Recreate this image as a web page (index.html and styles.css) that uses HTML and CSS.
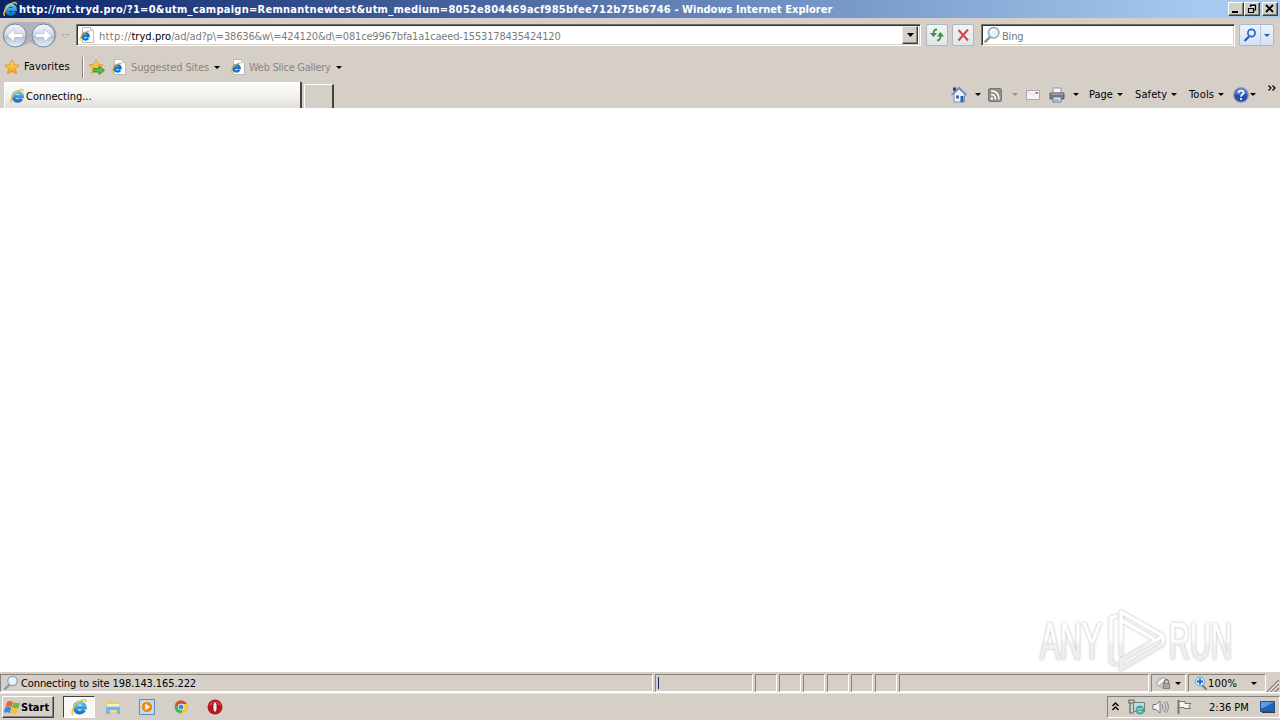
FILE: index.html
```html
<!DOCTYPE html>
<html lang="en">
<head>
<meta charset="utf-8">
<title>Windows Internet Explorer</title>
<link rel="stylesheet" href="styles.css">
</head>
<body>
<svg class="defs" width="0" height="0">
  <defs>
    <linearGradient id="blueE" x1="0" y1="0" x2="0" y2="1"><stop offset="0" stop-color="#5cc6f5"/><stop offset="1" stop-color="#1a70c4"/></linearGradient>
    <linearGradient id="orb" x1="0" y1="0" x2="0" y2="1"><stop offset="0" stop-color="#f4f6fa"/><stop offset=".48" stop-color="#d3dae6"/><stop offset=".52" stop-color="#b3c0d3"/><stop offset="1" stop-color="#e0f3fb"/></linearGradient>
    <linearGradient id="gold" x1="0" y1="0" x2="0" y2="1"><stop offset="0" stop-color="#ffe46a"/><stop offset="1" stop-color="#f49a12"/></linearGradient>
    <linearGradient id="mark" gradientUnits="userSpaceOnUse" x1="0" y1="10" x2="0" y2="66"><stop offset="0" stop-color="#fff"/><stop offset=".5" stop-color="#fff"/><stop offset=".58" stop-color="#f0f0f0"/><stop offset="1" stop-color="#ededed"/></linearGradient>
    <symbol id="ie" viewBox="0 0 16 16">
      <path d="M12.600 10.800A4.500 4.500 0 1 1 13.200 8.500H5.500" fill="none" stroke="url(#blueE)" stroke-width="3.400"/>
      <path d="M2.800 14.600C.6 13.500 2.800 7.800 6.400 4.600 10 1.500 14.500 0 14.600 3.600" fill="none" stroke="#f2c52c" stroke-width="1.400"/>
    </symbol>
    <symbol id="page" viewBox="0 0 16 16">
      <path d="M3.500.5h8l3 3v12h-11z" fill="#fff" stroke="#b4bcc3"/><path d="M11.500.5v3h3" fill="#e3eaf2" stroke="#b4bcc3"/>
      <path d="M9.300 10.900A3.200 3.200 0 1 1 9.700 9H4" fill="none" stroke="#1976c5" stroke-width="2.400"/>
      <path d="M1.600 13.600C-.2 12.500 3 6.800 6.500 5 9 3.600 10.500 4 10.300 5.500" fill="none" stroke="#e9ba2e" stroke-width="1.100"/>
    </symbol>
    <symbol id="star" viewBox="0 0 16 16"><path d="M8 .8l2.200 4.800 5.200.6-3.900 3.500 1.100 5.300L8 12.400 3.400 15l1.100-5.300L.6 6.200l5.200-.6z" fill="url(#gold)" stroke="#dc9420" stroke-width=".8"/></symbol>
    <symbol id="lens" viewBox="0 0 16 16"><path d="M6.500 9.500L1.500 14.600" stroke="#8d9298" stroke-width="2.200"/><circle cx="9.500" cy="6" r="4.700" fill="#e5f3fb" stroke="#8fa3b6" stroke-width="1.300"/><path d="M7 5.500a2.800 2.800 0 0 1 3-2.500" stroke="#fff" fill="none"/></symbol>
    <symbol id="down" viewBox="0 0 6 3"><path d="M0 0h6L3 3z" fill="currentColor"/></symbol>
  </defs>
</svg>
<div class="screen">
  <header class="titlebar">
    <svg class="i16"><use href="#ie"/></svg>
    <span class="title"><span class="addr">http://mt.tryd.pro/?1=0&amp;utm_campaign=Remnantnewtest&amp;utm_medium=8052e804469acf985bfee712b75b6746</span> - Windows Internet Explorer</span>
    <div class="winbtns">
      <span class="wbtn"><svg width="12" height="10"><path d="M2 8h6" stroke="#000" stroke-width="2"/></svg></span>
      <span class="wbtn"><svg width="12" height="10"><path d="M4.500 3V1h5v5H8M4 1.500h6M2 4.500h6M2.500 4v4.500h5V4" fill="none" stroke="#000" stroke-width="1.200"/></svg></span>
      <span class="wbtn close"><svg width="12" height="10"><path d="M2 1l7 7M9 1L2 8" stroke="#000" stroke-width="1.800"/></svg></span>
    </div>
  </header>

  <div class="addressrow">
    <svg class="nav" viewBox="0 0 58 30">
      <path d="M15 2h29a12 12 0 0 1 0 25q-8 0-14-5-6 5-15 5A12 12 0 0 1 15 2z" fill="#b3b2bc"/>
      <circle cx="15" cy="15.500" r="11.500" fill="url(#orb)" stroke="#76849a"/><circle cx="43.500" cy="15.500" r="11.500" fill="url(#orb)" stroke="#76849a"/>
      <path d="M7 15.500l7.500-6.500v4.500h8.500v4h-8.500V22zM51.500 15.500l-7.500-6.500v4.500h-8.500v4h8.500V22z" fill="#fff" stroke="#a3afc2" stroke-width=".6"/>
    </svg>
    <svg class="navdrop" viewBox="0 0 9 5"><path d="M1 .5h7L4.500 4z" fill="#dedad5" stroke="#aaa69f" stroke-width=".8"/></svg>
    <div class="address sunken">
      <svg class="i16"><use href="#page"/></svg>
      <span class="url"><span class="scheme">http://</span><b>tryd.pro</b>/ad/ad?p\=38636&amp;w\=424120&amp;d\=081ce9967bfa1a1caeed-1553178435424120</span>
      <span class="combo"><svg width="7" height="4"><path d="M0 0h7L3.500 4z"/></svg></span>
    </div>
    <span class="sq refresh"><svg width="16" height="16"><path d="M8 2.500Q4.500 2.500 4.500 7M8 13.500q3.500 0 3.500-4.500" fill="none" stroke="#3a9a3c" stroke-width="1.800"/><path d="M1 6h7l-3.500 4zM8 9.500h7L11.500 5z" fill="#36963a"/></svg></span>
    <span class="sq stop"><svg width="16" height="16"><path d="M3.500 3l9.500 10.500M13 2.500L3.500 13.500" stroke="#d0474b" stroke-width="2"/></svg></span>
    <div class="search sunken"><svg class="i18"><use href="#lens"/></svg><span class="bing">Bing</span></div>
    <div class="gobtn"><span><svg width="14" height="14"><path d="M6 8.500L1.500 13" stroke="#2857b8" stroke-width="2.200"/><circle cx="8.500" cy="5" r="3.600" fill="#e3effc" stroke="#2c63cb" stroke-width="1.700"/></svg></span><span><svg class="dd go"><use href="#down"/></svg></span></div>
  </div>

  <div class="favrow">
    <svg class="i16"><use href="#star"/></svg><span class="fav">Favorites</span>
    <i class="vsep"></i>
    <svg class="addfav" viewBox="0 0 18 16"><use href="#star" width="16" height="15"/><path d="M6 9.500h5V7l5.500 4.300-5.500 4.200V13H6z" fill="#55c044" stroke="#278a28" stroke-width=".8"/></svg>
    <svg class="i16 pg"><use href="#page"/></svg><span class="sugg">Suggested Sites</span><svg class="dd"><use href="#down"/></svg>
    <svg class="i16 pg2"><use href="#page"/></svg><span class="slice">Web Slice Gallery</span><svg class="dd"><use href="#down"/></svg>
  </div>

  <div class="tabrow">
    <div class="tab"><svg class="i16"><use href="#ie"/></svg><span class="conn">Connecting...</span></div>
    <div class="newtab"></div>
    <div class="commands">
      <svg class="home" viewBox="0 0 16 17"><path d="M3 8v8h10.500V8L8 3z" fill="#eef2fb" stroke="#7d8ec0"/><path d="M2 1.500h3V5H2z" fill="#26389b"/><path d="M.5 9L8 1.500 15.500 9" fill="none" stroke="#7485be" stroke-width="1.500"/><path d="M9.500 10h3v6h-3z" fill="#23639c"/><path d="M5 9.500h3v3H5z" fill="#53658f"/></svg>
      <svg class="dd d1"><use href="#down"/></svg>
      <svg class="rss" viewBox="0 0 14 14"><rect x=".5" y=".5" width="13" height="13" rx="1.500" fill="#92908e" stroke="#777"/><circle cx="3.800" cy="10.500" r="1.300" fill="#fff"/><path d="M3 6.500q4.500 0 4.500 5M3 3q8 0 8 8.500" fill="none" stroke="#fff" stroke-width="1.500"/></svg>
      <svg class="dd d2"><use href="#down"/></svg>
      <svg class="mail" viewBox="0 0 14 10"><path d="M.5.5h13v9H.5z" fill="#f5f3f5" stroke="#aaa6aa"/><path d="M1 1l5.500 4 2-1" fill="none" stroke="#ddd9dd"/><path d="M9.500 2h2.500v2H9.500z" fill="#c96572"/></svg>
      <svg class="printer" viewBox="0 0 16 16"><path d="M4 1h8v5H4z" fill="#f8f8fb" stroke="#92949b"/><path d="M1 6h14v6H1z" fill="#777a82" stroke="#5d6066"/><path d="M2 7h12" stroke="#b9bbc1"/><path d="M4 10h8v5H4z" fill="#ddecfb" stroke="#71777f"/><path d="M5 13h5" stroke="#5185be"/></svg>
      <svg class="dd d3"><use href="#down"/></svg>
      <span class="c1">Page</span><svg class="dd"><use href="#down"/></svg>
      <span class="c2">Safety</span><svg class="dd"><use href="#down"/></svg>
      <span class="c3">Tools</span><svg class="dd"><use href="#down"/></svg>
      <svg class="help" viewBox="0 0 16 16"><circle cx="8" cy="8" r="7.200" fill="#244dac" stroke="#8291b7" stroke-width="1.300"/><path d="M2 7a6 6 0 0 1 12 0q-6 2-12 0" fill="#7196dc" opacity=".6"/><path d="M5.500 6q0-2.500 2.600-2.500t2.500 2.300C10.600 7.500 8 7.500 8 9.800M8 11v2" fill="none" stroke="#fff" stroke-width="1.700"/></svg>
      <svg class="dd dh"><use href="#down"/></svg>
      <svg class="more" viewBox="0 0 8 6"><path d="M.5.5L3 3 .5 5.500M4.500.5L7 3 4.500 5.500" fill="none" stroke="#000" stroke-width="1.200"/></svg>
    </div>
  </div>

  <main class="content">
    <svg class="watermark" viewBox="0 0 210 70">
      <g class="mark">
        <text x="10" y="57" textLength="62" lengthAdjust="spacingAndGlyphs">ANY</text>
        <text x="139" y="57" textLength="63" lengthAdjust="spacingAndGlyphs">RUN</text>
        <path d="M87 14l-6 2v44l6 3M91 54V10l42 24-42 24v9l42-25v-8M91 18l33 19"/>
      </g>
    </svg>
  </main>

  <footer class="status">
    <div class="cell s0"><svg class="i16"><use href="#lens"/></svg><span class="stxt">Connecting to site 198.143.165.222</span></div>
    <div class="cell s1"><i class="caret"></i></div>
    <div class="cell sm"></div><div class="cell sm"></div><div class="cell sm"></div><div class="cell sm"></div><div class="cell sm"></div><div class="cell sm"></div>
    <div class="cell s2"></div>
    <div class="cell s3"><svg width="18" height="16"><path d="M1 9Q5 1 10 3v8q-4 3-9-2" fill="#c7c5c3" stroke="#aaa"/><path d="M3 9l6-5" stroke="#fff" stroke-width="2"/><path d="M9.500 8V6q2-3 4 0v2" fill="none" stroke="#777" stroke-width="1.300"/><path d="M8 8h7v6H8z" fill="#858381"/><path d="M9 10h5M9 12h5" stroke="#ccc"/></svg><svg class="dd"><use href="#down"/></svg></div>
    <div class="cell s4"><svg width="14" height="15"><path d="M8 9l4.500 4.500" stroke="#777" stroke-width="2"/><circle cx="6" cy="5.500" r="4.500" fill="#d8edff" stroke="#6a9cd2"/><path d="M3 5.500h6M6 2.500v6" stroke="#1c66bd" stroke-width="1.800"/></svg><span class="pct">100%</span><svg class="dd"><use href="#down"/></svg></div>
    <svg class="grip" viewBox="0 0 12 12"><path d="M0 12L12 0M4 12l8-8M8 12l4-4" stroke="#85817b" stroke-width="1.500"/><path d="M1.500 12L12 1.500M5.500 12L12 5.500" stroke="#fff" stroke-width=".8"/></svg>
  </footer>

  <footer class="taskbar">
    <div class="start"><svg width="17" height="16"><path d="M3 3q3-2 6 0L7.500 8q-3-1.500-6 0z" fill="#ed642d"/><path d="M9.500 3.300q3 1.500 6.500.2L14.500 9q-3 1-6.500-.6z" fill="#72b83e"/><path d="M1.200 8.500q3-1.500 6 0L5.700 14q-3-1.500-6-.2z" fill="#3b88d6"/><path d="M7.800 9q3 1.500 6.500.7L12.700 15q-3 .8-6.500-.8z" fill="#f8c32a"/></svg><span class="stt">Start</span></div>
    <div class="task"><svg class="i18"><use href="#ie"/></svg></div>
    <svg class="folder" viewBox="0 0 16 16"><path d="M1 2h6l1 1.500h6V13H1z" fill="#eecb62"/><path d="M2 5h12v3H2z" fill="#fff3a8"/><path d="M1 7h14v8h-3v-4H5v4H1z" fill="#72b8e6"/><path d="M1 7.500h14" stroke="#b5def5"/><path d="M5 11h7v2H5z" fill="#f4dc77"/></svg>
    <svg class="media" viewBox="0 0 16 16"><path d="M.5.5h15v15H.5z" fill="#b9daf4" stroke="#4d91cf"/><circle cx="8" cy="8" r="5.800" fill="#f18a18" stroke="#fff" stroke-width=".6"/><path d="M6.300 4.700L11 8l-4.700 3.300z" fill="#fff"/></svg>
    <svg class="chrome" viewBox="0 0 16 16"><circle cx="8" cy="8" r="6.500" fill="#4aad50"/><path d="M2.300 4.900A6.500 6.500 0 0 1 13.700 4.900H8L5.300 9.500z" fill="#de493b"/><path d="M13.700 4.900A6.500 6.500 0 0 1 7.700 14.500L10.800 9.400 8 4.900z" fill="#f6cb3c"/><circle cx="8" cy="8" r="3.200" fill="#fff"/><circle cx="8" cy="8" r="2.500" fill="#4288dc"/></svg>
    <svg class="opera" viewBox="0 0 16 16"><circle cx="8" cy="8" r="7.500" fill="#b51820"/><path d="M2 5Q8-1 14 5v2Q8 4 2 7z" fill="#d7575a" opacity=".6"/><ellipse cx="8" cy="8" rx="2.600" ry="5.400" fill="#7e0710"/><ellipse cx="8" cy="8" rx="1.700" ry="4.700" fill="#eee"/></svg>
    <div class="tray">
      <svg class="chev" viewBox="0 0 7 9"><path d="M.5 4L3.500 1l3 3M.5 8l3-3 3 3" fill="none" stroke="#000" stroke-width="1.400"/></svg>
      <svg class="net" viewBox="0 0 17 16"><path d="M1 1h5v3H1zM2 4v10h4" fill="none" stroke="#666" stroke-width="1.200"/><path d="M5.500 3.500h11v9h-11z" fill="#b9dde1" stroke="#647f86"/><circle cx="12" cy="11" r="4.500" fill="#4aa59b"/><path d="M9 10q3 1 6-1M10 13q2-1 4 0" stroke="#b9eadd" fill="none"/></svg>
      <svg class="vol" viewBox="0 0 17 16"><path d="M1 5.500h3L8 2v12l-4-3.500H1z" fill="#f5f5f5" stroke="#777"/><path d="M10 5q2 3 0 6M12 3q4 5 0 10M14 2q5 6 0 12" fill="none" stroke="#888"/></svg>
      <svg class="flag" viewBox="0 0 17 16"><path d="M2.500 1v14" stroke="#777" stroke-width="2"/><path d="M3 2.500h6v2h6l-2.500 3L15 9.500H8v-1H3z" fill="#f6f6f6" stroke="#777"/></svg>
      <span class="clock">2:36 PM</span>
      <svg class="desk" viewBox="0 0 16 14"><path d="M.5 1.500h14v10H.5z" fill="#1e64bd" stroke="#235087"/><path d="M1 2h13L3 8H1z" fill="#5f9be2"/><path d="M2 12.500h13" stroke="#333"/></svg>
    </div>
  </footer>
</div>
</body>
</html>
```
FILE: styles.css
```css
* { box-sizing: border-box; }
body { margin: 0; background: #fff; overflow: hidden; font: 11px/14px "DejaVu Sans Condensed", "DejaVu Sans", sans-serif; color: #000; }
svg { display: block; flex: none; }
span { white-space: nowrap; }
.defs { position: absolute; }
.screen { width: 1280px; height: 720px; display: flex; flex-direction: column; background: #d5cfc8; }
.i16 { width: 16px; height: 16px; flex: none; }
.i18 { width: 18px; height: 18px; flex: none; }
.dd { width: 6px; height: 3px; flex: none; margin-right: -1px; }

.titlebar { height: 18px; display: flex; align-items: center; padding: 0 2px; background: linear-gradient(90deg, #0a246a, #a6caf0 94%); color: #fff; }
.title { flex: 1; font-weight: bold; margin-left: 1px; padding-top: 1px; letter-spacing: 0.03px; }
.addr { letter-spacing: 0.265px; }
.winbtns { display: flex; }
.wbtn { width: 16px; height: 14px; background: #d4d0c8; border: 1px solid; border-color: #fff #404040 #404040 #fff; box-shadow: inset -1px -1px #808080; padding: 1px; overflow: hidden; }
.close { margin-left: 2px; }

.addressrow { height: 34px; display: flex; align-items: flex-start; padding-top: 6px; }
.nav { width: 58px; height: 30px; margin-top: -4px; }
.navdrop { width: 9px; height: 5px; margin: 10px 10px 0 3px; }
.sunken { background: #fff; border: 1px solid; border-color: #6e6a65 #fff #fff #807c76; box-shadow: inset 1px 1px #35332f, inset -1px -1px #d5d1ca; }
.address { width: 845px; height: 22px; margin-left: -4px; display: flex; align-items: center; padding: 1px 2px 0 2px; }
.url { margin-left: 4px; color: #7b7b7b; flex: 1; padding-top: 2px; letter-spacing: -0.18px; }
.scheme { letter-spacing: 0.3px; }
.url b { font-weight: normal; color: #000; letter-spacing: 0.05px; }
.combo { width: 16px; height: 18px; margin-top: -1px; background: #d5cfc8; border: 1px solid; border-color: #eee #404040 #404040 #eee; box-shadow: inset -1px -1px #888; display: grid; place-items: center; }
.address .i16 { margin-top: -1px; }
.sq { width: 22px; height: 22px; border: 1px solid #aab7c6; border-radius: 2px; background: linear-gradient(#f2f3f4, #e1e6ec); display: grid; place-items: center; }
.refresh { margin-left: 5px; }
.stop { margin-left: 4px; }
.search { width: 254px; height: 22px; margin-left: 7px; display: flex; align-items: center; padding-left: 1px; }
.bing { color: #777; margin-left: 1px; padding-top: 3px; letter-spacing: -0.2px; }
.gobtn { margin-left: 4px; width: 35px; height: 22px; border: 1px solid #a9b9d1; border-radius: 2px; background: linear-gradient(#edf3fc, #d5e1f5); display: grid; grid-template-columns: 20px 13px; }
.gobtn span { display: grid; place-items: center; }
.gobtn span + span { border-left: 1px solid #b8c5da; }
.gobtn .dd { color: #2c5eaa; margin-right: 0; }

.favrow { height: 30px; display: flex; align-items: center; padding-left: 4px; }
.fav { width: 58px; margin-left: 4px; letter-spacing: 0.13px; }
.vsep { width: 2px; height: 21px; border-left: 1px solid #89857f; border-right: 1px solid #fff; margin-right: 4px; }
.addfav { width: 18px; height: 16px; }
.pg { margin-left: 5px; }
.sugg { width: 83px; margin-left: 4px; color: #8a8681; letter-spacing: -0.13px; padding-top: 1px; }
.pg2 { margin-left: 11px; }
.slice { width: 87px; margin-left: 3px; color: #8a8681; letter-spacing: -0.28px; padding-top: 1px; }

.tabrow { height: 26px; display: flex; padding-left: 4px; }
.tab { width: 298px; height: 26px; background: linear-gradient(#fff, #f2f0ed 55%, #e2dfda); border-left: 1px solid #fff; border-right: 2px solid #45413d; display: flex; align-items: center; padding: 2px 0 0 4px; }
.conn { margin-left: 1px; padding-top: 1px; }
.newtab { width: 30px; height: 24px; margin: 2px 0 0 2px; border: 1px solid #fff; border-right: 2px solid #45413d; border-bottom: 0; }
.commands { margin-left: 617px; display: flex; align-items: center; height: 25px; }
.home { width: 16px; height: 17px; }
.d1 { margin-left: 8px; }
.rss { width: 14px; height: 14px; margin-left: 8px; }
.d2 { margin-left: 10px; color: #99948d; }
.mail { width: 14px; height: 10px; margin-left: 9px; }
.printer { width: 16px; height: 16px; margin-left: 9px; }
.d3 { margin-left: 8px; }
.c1 { width: 28px; margin-left: 11px; }
.c2 { width: 36px; margin-left: 13px; letter-spacing: 0.1px; }
.c3 { width: 29px; margin-left: 13px; letter-spacing: 0.2px; }
.help { width: 16px; height: 16px; margin-left: 10px; }
.dh { margin-left: 1px; }
.more { width: 8px; height: 6px; margin: -13px 0 0 13px; }

.content { height: 564px; background: #fff; display: flex; justify-content: flex-end; align-items: flex-end; padding-right: 40px; }
.watermark { width: 210px; height: 70px; }
.mark { fill: url(#mark); stroke: url(#mark); stroke-width: 0.6px; stroke-linejoin: round; filter: drop-shadow(0 0 1.2px #c6c6c6) drop-shadow(0 0 1px #e8e8e8); }
.mark text { font: 51px "Liberation Sans Narrow", "Liberation Sans", sans-serif; }
.mark path { fill: none; stroke-width: 3.5px; }

.status { height: 21px; display: flex; padding-top: 2px; border-bottom: 1px solid #fff; }
.cell { height: 18px; border: 1px solid; border-color: #888179 #fff #fff #888179; margin-right: 2px; display: flex; align-items: center; flex: none; }
.s0 { width: 653px; padding-left: 2px; }
.stxt { margin-left: 2px; letter-spacing: -0.1px; padding-top: 1px; }
.s1 { width: 98px; }
.caret { width: 1px; height: 12px; background: #0a246a; margin-left: 2px; }
.sm { width: 22px; }
.s2 { width: 250px; }
.s3 { width: 35px; padding-left: 3px; }
.s3 .dd { margin-left: 2px; }
.s4 { width: 78px; padding-left: 5px; }
.pct { width: 43px; padding-top: 1px; letter-spacing: 0.2px; }
.grip { width: 12px; height: 12px; margin: 6px 0 0 -1px; }

.taskbar { height: 27px; display: flex; align-items: center; border-top: 1px solid #e8e4df; }
.start { width: 52px; height: 22px; margin-left: 2px; border: 1px solid; border-color: #fff #404040 #404040 #fff; box-shadow: inset -1px -1px #808080; display: flex; align-items: center; padding-left: 1px; font-weight: bold; }
.stt { padding-top: 1px; }
.task { width: 32px; height: 22px; margin-left: 9px; background: #f9f8f7; border: 1px solid; border-color: #404040 #fff #fff #404040; display: grid; place-items: center; }
.folder { width: 16px; height: 16px; margin-left: 10px; }
.media, .chrome, .opera { width: 16px; height: 16px; margin-left: 18px; }
.tray { width: 173px; height: 22px; margin-left: auto; border: 1px solid; border-color: #888179 #fff #fff #888179; display: flex; align-items: center; padding-left: 4px; }
.chev { width: 7px; height: 9px; margin-top: -2px; }
.net { width: 17px; height: 16px; margin-left: 9px; }
.vol { width: 17px; height: 16px; margin-left: 7px; }
.flag { width: 17px; height: 16px; margin-left: 7px; }
.clock { width: 50px; margin-left: 16px; padding-top: 1px; }
.desk { width: 16px; height: 14px; margin-left: 1px; }
```
